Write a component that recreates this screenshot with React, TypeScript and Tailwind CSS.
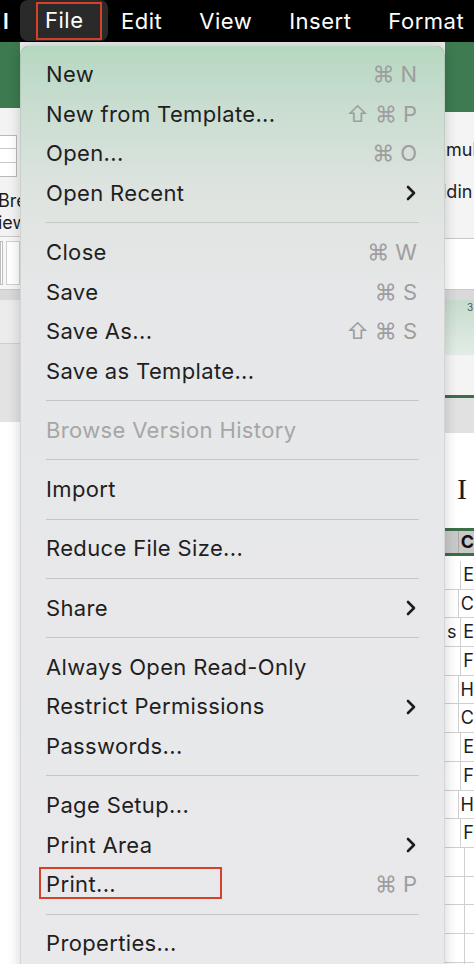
import React from 'react';

type Item =
  | { kind: 'item'; label: string; keys?: string[]; sub?: boolean; disabled?: boolean; marked?: boolean }
  | { kind: 'sep' };

const MENU: Item[] = [
  { kind: 'item', label: 'New', keys: ['⌘', 'N'] },
  { kind: 'item', label: 'New from Template...', keys: ['⇧', '⌘', 'P'] },
  { kind: 'item', label: 'Open...', keys: ['⌘', 'O'] },
  { kind: 'item', label: 'Open Recent', sub: true },
  { kind: 'sep' },
  { kind: 'item', label: 'Close', keys: ['⌘', 'W'] },
  { kind: 'item', label: 'Save', keys: ['⌘', 'S'] },
  { kind: 'item', label: 'Save As...', keys: ['⇧', '⌘', 'S'] },
  { kind: 'item', label: 'Save as Template...' },
  { kind: 'sep' },
  { kind: 'item', label: 'Browse Version History', disabled: true },
  { kind: 'sep' },
  { kind: 'item', label: 'Import' },
  { kind: 'sep' },
  { kind: 'item', label: 'Reduce File Size...' },
  { kind: 'sep' },
  { kind: 'item', label: 'Share', sub: true },
  { kind: 'sep' },
  { kind: 'item', label: 'Always Open Read-Only' },
  { kind: 'item', label: 'Restrict Permissions', sub: true },
  { kind: 'item', label: 'Passwords...' },
  { kind: 'sep' },
  { kind: 'item', label: 'Page Setup...' },
  { kind: 'item', label: 'Print Area', sub: true },
  { kind: 'item', label: 'Print...', keys: ['⌘', 'P'], marked: true },
  { kind: 'sep' },
  { kind: 'item', label: 'Properties...' },
];

const ROW_LETTERS = ['E', 'C', 'E', 'F', 'H', 'C', 'E', 'F', 'H', 'F', '', '', '', '', ''];

const Chevron = () => (
  <svg width="12" height="18" viewBox="0 0 12 18" fill="none">
    <path d="M3 3l6 6-6 6" stroke="#1d1d1f" strokeWidth="2.6" strokeLinecap="round" strokeLinejoin="round" />
  </svg>
);

/* ── Fragmenty arkusza widoczne po bokach menu ───────────── */
const LeftStrip = () => (
  <div className="flex w-[20px] shrink-0 flex-col overflow-hidden">
    <div className="h-[66px] shrink-0 bg-[#3d7a4f]" />
    <div className="flex h-[128px] shrink-0 flex-col bg-[#f3f3f3] pt-[27px]">
      <div className="ml-[-2px] h-[42px] w-[19px] shrink-0 border border-[#b9b9b9] bg-white bg-[linear-gradient(#fff_12px,#c8c8c8_12px,#c8c8c8_13px,#fff_13px,#fff_26px,#c8c8c8_26px,#c8c8c8_27px,#fff_27px)]" />
      <div className="mt-[13px] ml-[-2px] text-[18px] leading-[22px] whitespace-nowrap text-[#1d1d1f]">Bre</div>
      <div className="ml-[-2px] text-[18px] leading-[22px] whitespace-nowrap text-[#1d1d1f]">iew</div>
    </div>
    <div className="flex h-[54px] shrink-0 border-y border-[#c9c9c9] bg-[#f7f7f7] py-[4px]">
      <div className="w-[3px] border border-[#bdbdbd] bg-white" />
      <div className="ml-[3px] flex-1 border border-[#cfcfcf] bg-white" />
    </div>
    <div className="h-[10px] shrink-0 bg-[#d9d9d9]" />
    <div className="h-[44px] shrink-0 border-b border-[#cfcfcf] bg-[#ececec]" />
    <div className="h-[78px] shrink-0 bg-[#e3e3e3]" />
    <div className="flex-1 bg-white" />
  </div>
);

const RightStrip = () => (
  <div className="flex w-[29px] shrink-0 flex-col overflow-hidden">
    <div className="h-[70px] shrink-0 bg-[#3e7b51]" />
    <div className="flex h-[126px] shrink-0 flex-col bg-[#f4f4f4] pt-[27px]">
      <div className="ml-[1px] text-[18px] leading-[22px] whitespace-nowrap text-[#1d1d1f]">mul</div>
      <div className="mt-[20px] ml-[-3px] text-[18px] leading-[22px] whitespace-nowrap text-[#1d1d1f]">ldin</div>
    </div>
    <div className="h-[52px] shrink-0 border-y border-[#c9c9c9] bg-white" />
    <div className="h-[10px] shrink-0 bg-[#d9d9d9]" />
    <div className="h-[55px] shrink-0 bg-[linear-gradient(180deg,#c6dccd,#e3ece6)] pl-[22px] text-[10px] leading-[14px] text-[#555]">3</div>
    <div className="h-[40px] shrink-0 bg-[#f4f4f4]" />
    <div className="h-[3px] shrink-0 bg-[#3c6e48]" />
    <div className="h-[35px] shrink-0 bg-[#e1e1e1]" />
    <div className="flex h-[95px] shrink-0 items-end bg-white pb-[24px] pl-[12px] font-['Liberation_Serif',serif] text-[30px] leading-none text-[#1d1d1f]">
      I
    </div>
    <div className="h-[3px] shrink-0 bg-[#3c6e48]" />
    <div className="flex h-[22px] shrink-0 bg-[#c9c9c9]">
      <div className="w-[20px] border-r border-[#a9a9a9]" />
      <div className="pl-[2px] text-[18px] leading-[22px] font-bold text-[#111]">C</div>
    </div>
    <div className="h-[3px] shrink-0 bg-[#3c6e48]" />
    <div className="h-[5px] shrink-0 bg-white" />
    {ROW_LETTERS.map((l, i) => (
      <div key={i} className="flex h-[28.7px] shrink-0 border-b border-[#d0d0d0] bg-white">
        <div className="w-[20px] border-r border-[#d0d0d0] text-[18px] leading-[28px] text-[#1d1d1f]">
          {i === 2 ? <span className="pl-[2px]">s</span> : null}
        </div>
        <div className="pl-[2px] text-[18px] leading-[28px] text-[#1d1d1f]">{l}</div>
      </div>
    ))}
  </div>
);

/* ── Menu Plik ─────────────────────────────────────────── */
const FileMenu = () => (
  <div className="absolute top-[45px] left-[20px] h-[940px] w-[425px] rounded-t-[10px] border border-[rgba(0,0,0,0.08)] bg-[linear-gradient(180deg,#b5d8c1_0px,#c9ddd0_60px,#dde3df_140px,#e6e7e8_240px,#e9e9eb_100%)] pt-[9px] shadow-[0_0_14px_rgba(0,0,0,0.18)]">
    {MENU.map((it, i) => {
      if (it.kind === 'sep') {
        return (
          <div key={i} className="flex h-[19.75px] items-center px-[25px]">
            <div className="h-px w-full bg-[#c6c6c6]" />
          </div>
        );
      }
      return (
        <div key={i} className="relative flex h-[39.5px] items-center justify-between pr-[27px] pl-[25px]">
          <span className={`text-[22px] tracking-[0.35px] ${it.disabled ? 'text-[#a6a6a6]' : 'text-[#1f1f1f]'}`}>
            {it.label}
          </span>
          {it.keys && (
            <span className="flex items-center gap-[6px] text-[22px] text-[#9e9e9e]">
              {it.keys.map((k, j) => (
                <span key={j}>{k}</span>
              ))}
            </span>
          )}
          {it.sub && <Chevron />}
          {it.marked && (
            <div className="absolute top-[2px] left-[18px] h-[32px] w-[183px] border-2 border-[#d6412c]" />
          )}
        </div>
      );
    })}
  </div>
);

export default function App() {
  return (
    <div className="relative h-[964px] w-[474px] overflow-hidden bg-white font-['Inter','Noto_Sans','DejaVu_Sans',sans-serif]">
      {/* pasek menu */}
      <div className="flex h-[42px] items-center bg-black text-[22px] tracking-[0.5px] text-white">
        <span className="ml-[3px] w-[17px] font-semibold">l</span>
        <div className="flex h-[41px] w-[88px] items-center self-start rounded-[8px] bg-[#2a2a2a]">
          <div className="ml-[16px] flex h-[38px] w-[66px] items-center border-2 border-[#d6412c] pl-[7px]">File</div>
        </div>
        <div className="ml-[13px] flex gap-[37px] whitespace-nowrap">
          <span>Edit</span>
          <span>View</span>
          <span>Insert</span>
          <span>Format</span>
        </div>
      </div>
      <div className="flex h-[922px]">
        <LeftStrip />
        <div className="flex-1 bg-[#eeeeee]" />
        <RightStrip />
      </div>
      <FileMenu />
    </div>
  );
}
